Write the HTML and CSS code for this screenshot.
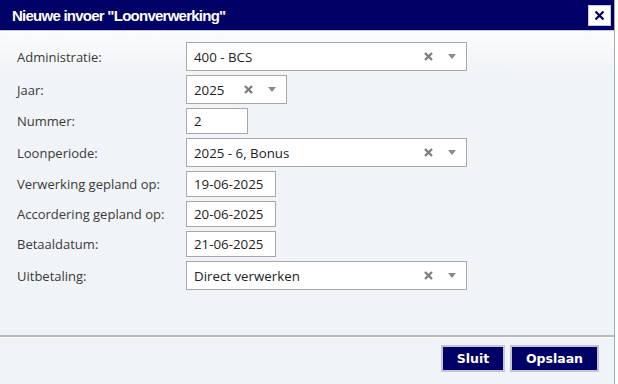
FILE: index.html
```html
<!DOCTYPE html>
<html lang="nl">
<head>
    <meta charset="UTF-8">
    <title>Nieuwe invoer "Loonverwerking"</title>
    <link rel="stylesheet" href="styles.css">
</head>
<body>
    <div class="dialog">
        <div class="dialog-header">
            <span class="dialog-title">Nieuwe invoer "Loonverwerking"</span>
            <button class="close-btn" type="button">
                <svg width="11" height="11" viewBox="0 0 11 11"><path d="M1.5 1.5 L9.5 9.5 M9.5 1.5 L1.5 9.5" stroke="#000066" stroke-width="2.2" fill="none"/></svg>
            </button>
        </div>

        <form class="dialog-body">
            <div class="row">
                <label>Administratie:</label>
                <div class="select wide">
                    <span class="value">400 - BCS</span>
                    <svg class="clear" width="9" height="9" viewBox="0 0 9 9"><path d="M1 1 L8 8 M8 1 L1 8" stroke="#7c7c7c" stroke-width="2.3" fill="none"/></svg>
                    <span class="arrow"></span>
                </div>
            </div>
            <div class="row">
                <label>Jaar:</label>
                <div class="select year">
                    <span class="value">2025</span>
                    <svg class="clear" width="9" height="9" viewBox="0 0 9 9"><path d="M1 1 L8 8 M8 1 L1 8" stroke="#7c7c7c" stroke-width="2.3" fill="none"/></svg>
                    <span class="arrow"></span>
                </div>
            </div>
            <div class="row">
                <label>Nummer:</label>
                <input class="field num" type="text" value="2">
            </div>
            <div class="row">
                <label>Loonperiode:</label>
                <div class="select wide">
                    <span class="value">2025 - 6, Bonus</span>
                    <svg class="clear" width="9" height="9" viewBox="0 0 9 9"><path d="M1 1 L8 8 M8 1 L1 8" stroke="#7c7c7c" stroke-width="2.3" fill="none"/></svg>
                    <span class="arrow"></span>
                </div>
            </div>
            <div class="row">
                <label>Verwerking gepland op:</label>
                <input class="field date" type="text" value="19-06-2025">
            </div>
            <div class="row">
                <label>Accordering gepland op:</label>
                <input class="field date" type="text" value="20-06-2025">
            </div>
            <div class="row">
                <label>Betaaldatum:</label>
                <input class="field date" type="text" value="21-06-2025">
            </div>
            <div class="row">
                <label>Uitbetaling:</label>
                <div class="select wide">
                    <span class="value">Direct verwerken</span>
                    <svg class="clear" width="9" height="9" viewBox="0 0 9 9"><path d="M1 1 L8 8 M8 1 L1 8" stroke="#7c7c7c" stroke-width="2.3" fill="none"/></svg>
                    <span class="arrow"></span>
                </div>
            </div>
        </form>

        <div class="dialog-footer">
            <button class="btn sluit" type="button">Sluit</button>
            <button class="btn opslaan" type="button">Opslaan</button>
        </div>
    </div>
</body>
</html>
```

FILE: styles.css
```css
body {
    margin: 0;
    background-color: #ffffff;
    font-family: "Open Sans", "DejaVu Sans", sans-serif;
}

.dialog {
    width: 614px;
    height: 384px;
    border-right: 1px solid #a9a9b0;
    background-color: #f0f3f7;
    display: flex;
    flex-direction: column;
}

.dialog-header {
    height: 30px;
    flex-shrink: 0;
    background-color: #000066;
    border-bottom: 1px solid #c4c4d4;
    display: flex;
    align-items: center;
    justify-content: space-between;
    padding: 0 3px 0 12px;
}

.dialog-title {
    color: white;
    font-family: "Liberation Sans", Arial, sans-serif;
    font-weight: bold;
    font-size: 15px;
    letter-spacing: -0.75px;
}

.close-btn {
    width: 23px;
    height: 21px;
    margin-top: 1px;
    padding: 0;
    background-color: #ffffff;
    border: 1px solid #c8c8d8;
    display: flex;
    align-items: center;
    justify-content: center;
}

.dialog-body {
    flex: 1;
    padding: 11px 0 0 17px;
    background: linear-gradient(#fbfcfd 0px, #f0f3f7 45px);
}

.row {
    display: flex;
    align-items: center;
    margin-bottom: 4px;
}

.row label {
    width: 169px;
    font-size: 13px;
    color: #3a3a3a;
}

.select,
.field {
    box-sizing: border-box;
    background-color: #ffffff;
    border: 1px solid #a8a8a8;
    font-family: "Open Sans", "DejaVu Sans", sans-serif;
    font-size: 13.3px;
    color: #222;
}

.select {
    height: 29px;
    display: flex;
    align-items: center;
    padding-left: 7px;
}

.select .value {
    flex: 1;
}

.select .clear {
    margin-right: 15px;
}

.select .arrow {
    width: 0;
    height: 0;
    border-left: 4px solid transparent;
    border-right: 4px solid transparent;
    border-top: 5px solid #8a8a8a;
    margin-right: 10px;
}

.wide {
    width: 281px;
}

.year {
    width: 101px;
}

.field {
    height: 26px;
    padding: 0 7px;
}

.num {
    width: 62px;
}

.date {
    width: 90px;
}

.dialog-footer {
    box-sizing: border-box;
    height: 49px;
    flex-shrink: 0;
    border-top: 2px solid #b9b9bd;
    box-shadow: inset 0 1px #ffffff;
    display: flex;
    justify-content: flex-end;
    align-items: flex-start;
    gap: 5px;
    padding: 8px 15px 0 0;
}

.btn {
    height: 27px;
    background-color: #000066;
    color: white;
    border: 2px solid #c4c4d0;
    font-family: "DejaVu Sans", sans-serif;
    font-weight: bold;
    font-size: 12.5px;
    cursor: pointer;
}

.sluit {
    width: 64px;
}

.opslaan {
    width: 89px;
}
```
